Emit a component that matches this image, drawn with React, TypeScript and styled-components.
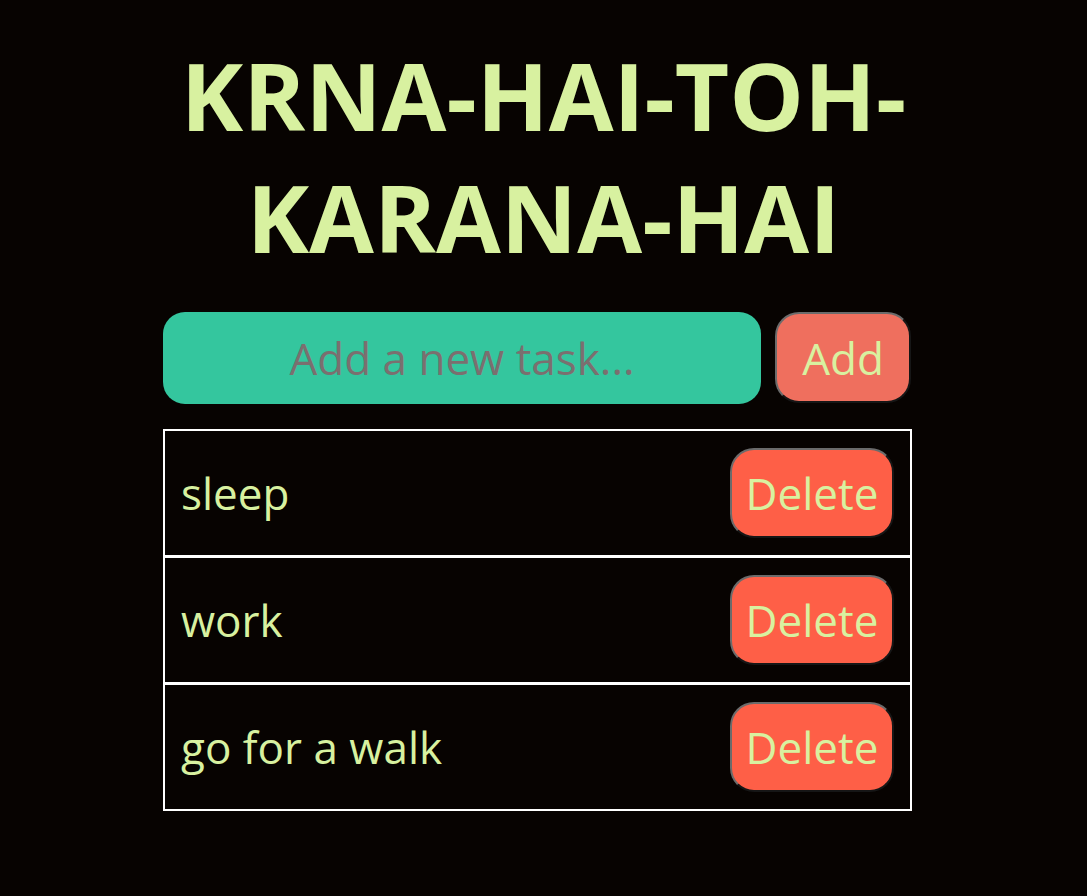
import React, { useState } from "react";
import styled, { createGlobalStyle } from "styled-components";

const Global = createGlobalStyle`
  html, body {
    margin: 0;
    padding: 0;
    background: #070301;
  }
  body {
    font-family: "Open Sans", "Noto Sans", sans-serif;
    color: #d8f1a0;
  }
  * { box-sizing: border-box; }
`;

const Page = styled.div`
  min-height: 896px;
  padding-top: 34px;
`;

const Title = styled.h1`
  margin: 0 auto;
  max-width: 800px;
  text-align: center;
  font-size: 94px;
  line-height: 122px;
  font-weight: 700;
  letter-spacing: 0;
  color: #d8f1a0;
`;

const Container = styled.div`
  width: 749px;
  margin: 34px 0 0 163px;
`;

const Form = styled.form`
  display: flex;
  gap: 14px;
  align-items: stretch;
  margin-bottom: 25px;
`;

const Input = styled.input`
  flex: 0 0 598px;
  height: 92px;
  border: none;
  border-radius: 22px;
  background: #34c69e;
  font-family: inherit;
  font-size: 44px;
  text-align: center;
  color: #d8f1a0;
  outline: none;
  &::placeholder {
    color: #7b6f6f;
  }
`;

const Button = styled.button<{ $tone: "add" | "delete" }>`
  font-family: inherit;
  font-size: 44px;
  line-height: 54px;
  color: #d8f1a0;
  border: 2px outset #6b6b6b;
  border-radius: 24px;
  background: ${(p) => (p.$tone === "add" ? "#ef6f5e" : "#fe5f47")};
  padding: 0;
  cursor: pointer;
  flex: 0 0 auto;
`;

const AddButton = styled(Button)`
  width: 136px;
  height: 91px;
`;

const DeleteButton = styled(Button)`
  width: 164px;
  height: 90px;
`;

const List = styled.ul`
  list-style: none;
  margin: 0;
  padding: 0;
  border: 2px solid #ffffff;
`;

const Row = styled.li`
  display: flex;
  align-items: center;
  justify-content: space-between;
  height: 124px;
  padding: 16px;
  & + & {
    border-top: 3px solid #ffffff;
    height: 127px;
  }
`;

const TaskText = styled.span`
  font-size: 44px;
  color: #d8f1a0;
`;

export default function App() {
  const [tasks, setTasks] = useState<string[]>(["sleep", "work", "go for a walk"]);
  const [value, setValue] = useState("");

  const add = (e: React.FormEvent) => {
    e.preventDefault();
    if (!value.trim()) return;
    setTasks([...tasks, value.trim()]);
    setValue("");
  };

  return (
    <Page>
      <Global />
      <Title>KRNA-HAI-TOH-KARANA-HAI</Title>
      <Container>
        <Form onSubmit={add}>
          <Input
            placeholder="Add a new task..."
            value={value}
            onChange={(e) => setValue(e.target.value)}
          />
          <AddButton $tone="add" type="submit">Add</AddButton>
        </Form>
        <List>
          {tasks.map((t, i) => (
            <Row key={i}>
              <TaskText>{t}</TaskText>
              <DeleteButton
                $tone="delete"
                type="button"
                onClick={() => setTasks(tasks.filter((_, j) => j !== i))}
              >
                Delete
              </DeleteButton>
            </Row>
          ))}
        </List>
      </Container>
    </Page>
  );
}
